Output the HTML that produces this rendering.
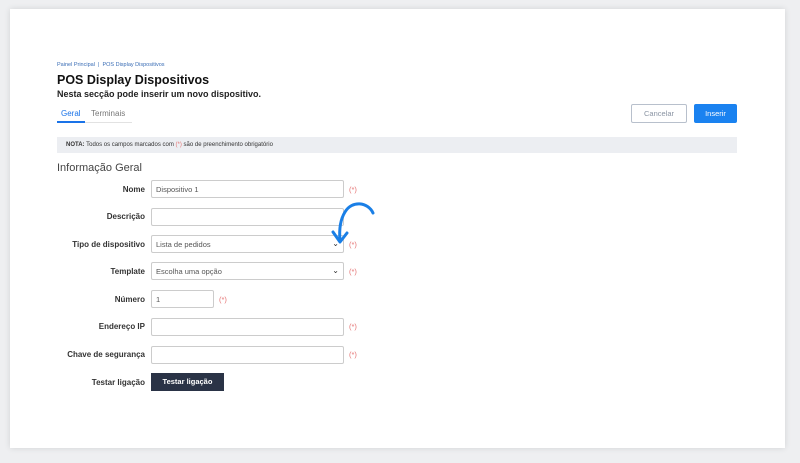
<!DOCTYPE html>
<html><head><meta charset="utf-8"><style>
*{box-sizing:border-box;margin:0;padding:0}
body{width:800px;height:463px;background:#eeeff1;font-family:"Liberation Sans",sans-serif;position:relative;overflow:hidden}
.card{position:absolute;left:10px;top:9px;width:775px;height:439px;background:#fff;box-shadow:0 0 6px rgba(0,0,0,.12)}
.a{position:absolute;white-space:nowrap}
.lbl{position:absolute;right:655px;font-size:8px;font-weight:bold;color:#333;white-space:nowrap}
.in{position:absolute;left:151px;width:193px;height:18px;border:1px solid #ccc;border-radius:2px;font-size:7.5px;color:#555;padding:4px 4px}
.req{position:absolute;left:349px;font-size:7.5px;color:#e57373}
.chev{position:absolute;right:4px;top:3px;font-size:8px;color:#333}
</style></head><body>
<div class="card"></div>
<div class="a" style="left:57px;top:62px;font-size:5.5px;color:#3a6db5">Painel Principal &nbsp;|&nbsp; POS Display Dispositivos</div>
<div class="a" style="left:57px;top:73px;font-size:12.5px;font-weight:bold;color:#111">POS Display Dispositivos</div>
<div class="a" style="left:57px;top:89px;font-size:9px;font-weight:bold;color:#222">Nesta secção pode inserir um novo dispositivo.</div>
<div class="a" style="left:61px;top:109px;font-size:8px;color:#1a73e8">Geral</div>
<div class="a" style="left:91px;top:109px;font-size:8px;color:#777">Terminais</div>
<div class="a" style="left:57px;top:121px;width:28px;height:2px;background:#1a73e8"></div>
<div class="a" style="left:85px;top:122px;width:47px;height:1px;background:#e2e2e2"></div>
<div class="a" style="left:631px;top:104px;width:56px;height:19px;border:1px solid #b8c0cc;border-radius:2px;font-size:7.5px;color:#8a94a3;text-align:center;line-height:17px">Cancelar</div>
<div class="a" style="left:694px;top:104px;width:43px;height:19px;background:#1a82f0;border-radius:2px;font-size:7.5px;color:#fff;text-align:center;line-height:19px">Inserir</div>
<div class="a" style="left:57px;top:137px;width:680px;height:16px;background:#eceef2;font-size:6px;color:#333;padding:5px 0 0 9px"><b>NOTA:</b> Todos os campos marcados com <span style="color:#e57373">(*)</span> são de preenchimento obrigatório</div>
<div class="a" style="left:57px;top:162px;font-size:11px;color:#444">Informação Geral</div>

<div class="lbl" style="top:185px">Nome</div><div class="in" style="top:180px">Dispositivo 1</div><div class="req" style="top:185px">(*)</div>
<div class="lbl" style="top:212px">Descrição</div><div class="in" style="top:208px"></div>
<div class="lbl" style="top:240px">Tipo de dispositivo</div><div class="in" style="top:235px">Lista de pedidos<span class="chev">⌄</span></div><div class="req" style="top:240px">(*)</div>
<div class="lbl" style="top:267px">Template</div><div class="in" style="top:262px">Escolha uma opção<span class="chev">⌄</span></div><div class="req" style="top:267px">(*)</div>
<div class="lbl" style="top:295px">Número</div><div class="in" style="top:290px;width:63px">1</div><div class="req" style="top:295px;left:219px">(*)</div>
<div class="lbl" style="top:322px">Endereço IP</div><div class="in" style="top:318px"></div><div class="req" style="top:322px">(*)</div>
<div class="lbl" style="top:350px">Chave de segurança</div><div class="in" style="top:346px"></div><div class="req" style="top:350px">(*)</div>
<div class="lbl" style="top:378px">Testar ligação</div>
<div class="a" style="left:151px;top:373px;width:73px;height:18px;background:#2a3346;color:#fff;font-size:7.5px;font-weight:bold;text-align:center;line-height:18px">Testar ligação</div>
<svg class="a" style="left:0;top:0" width="800" height="463"><path d="M373 213 C368 202 352 200 345 212 C340 220 339 230 340 241" fill="none" stroke="#1a7fe6" stroke-width="3" stroke-linecap="round"/><path d="M333 232 L340 242 L347 233" fill="none" stroke="#1a7fe6" stroke-width="3" stroke-linecap="round" stroke-linejoin="round"/></svg>
</body></html>
